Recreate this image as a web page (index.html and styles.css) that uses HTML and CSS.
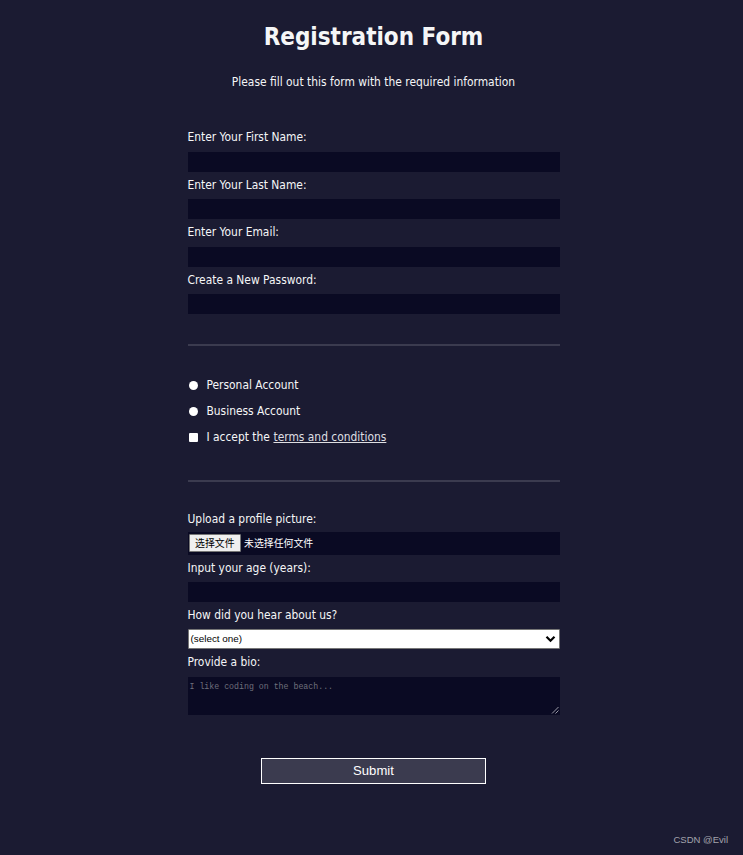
FILE: index.html
```html
<!DOCTYPE html>
<html lang="en">
<head>
<meta charset="utf-8">
<title>Registration Form</title>
<link rel="stylesheet" href="styles.css">
</head>
<body>
<h1 class="title">Registration Form</h1>
<p class="intro">Please fill out this form with the required information</p>
<form class="form">
  <fieldset class="group group-bordered">
    <label class="label">Enter Your First Name:</label>
    <div class="field"></div>
    <label class="label">Enter Your Last Name:</label>
    <div class="field"></div>
    <label class="label">Enter Your Email:</label>
    <div class="field"></div>
    <label class="label">Create a New Password:</label>
    <div class="field"></div>
  </fieldset>
  <fieldset class="group group-bordered group-choices">
    <label class="choice"><span class="radio"></span>Personal Account</label>
    <label class="choice"><span class="radio"></span>Business Account</label>
    <label class="choice"><span class="check"></span>I accept the <a class="link" href="#">terms and conditions</a></label>
  </fieldset>
  <fieldset class="group group-last">
    <label class="label">Upload a profile picture:</label>
    <div class="file"><span class="file-btn">选择文件</span><span class="file-name">未选择任何文件</span></div>
    <label class="label">Input your age (years):</label>
    <div class="field"></div>
    <label class="label">How did you hear about us?</label>
    <div class="select"><span>(select one)</span><svg class="chev" width="11" height="8" viewBox="0 0 11 8"><path d="M1.5 1.8 L5.5 5.8 L9.5 1.8" fill="none" stroke="#000" stroke-width="2.2"/></svg></div>
    <label class="label">Provide a bio:</label>
    <div class="textarea"><span class="placeholder">I like coding on the beach...</span><svg class="grip" width="8" height="8" viewBox="0 0 8 8"><path d="M7.5 1 L1 7.5 M7.5 4.5 L4.5 7.5" stroke="#9a9aa6" stroke-width="1"/></svg></div>
  </fieldset>
  <div class="submit">Submit</div>
</form>
<div class="watermark">CSDN @Evil</div>
</body>
</html>
```
FILE: styles.css
```css
html, body {
  margin: 0;
  padding: 0;
}
body {
  background: #1b1b32;
  color: #f5f6f7;
  font-family: "DejaVu Sans Condensed", "DejaVu Sans", sans-serif;
  font-size: 11.9px;
  line-height: 14px;
  padding: 2px 0 0 4px;
  min-height: 853px;
  position: relative;
}
.title {
  font-size: 24px;
  line-height: 28px;
  font-weight: bold;
  text-align: center;
  margin: 21px 0 0;
}
.intro {
  text-align: center;
  margin: 24px 0 0;
}
.form {
  width: 372px;
  margin: 0 auto;
}
.group {
  border: none;
  margin: 0;
  padding: 35px 0 0;
  min-width: 0;
}
.group-bordered {
  border-bottom: 2px solid #3b3b4f;
  padding-bottom: 30px;
}
.label {
  display: block;
  margin: 6px 0 0;
}
.field {
  margin-top: 7.5px;
  height: 20px;
  background: #0a0a23;
}
.group-choices {
  display: flex;
  flex-direction: column;
  gap: 12px;
  padding-top: 32px;
  padding-bottom: 35.5px;
}
.choice {
  display: flex;
  align-items: center;
}
.radio {
  width: 9px;
  height: 9px;
  border-radius: 50%;
  background: #fff;
  margin: 1px 9px 0 1px;
}
.check {
  width: 9px;
  height: 9px;
  background: #fff;
  border-radius: 1px;
  margin: 1px 9px 0 1px;
}
.link {
  color: #dfdfe2;
  margin-left: 0.3em;
}
.group-last {
  padding-top: 24px;
}
.file {
  margin-top: 6.5px;
  height: 22.5px;
  background: #0a0a23;
  display: flex;
  align-items: center;
  padding-left: 1.5px;
  font-family: "Noto Sans CJK SC", sans-serif;
  font-size: 9.9px;
}
.file-btn {
  background: #efefef;
  color: #000;
  border: 1px solid #767676;
  border-radius: 1px;
  height: 16px;
  line-height: 16px;
  padding: 0 5px;
  margin-right: 3.5px;
}
.file-name {
  color: #fff;
}
.select {
  margin-top: 7px;
  height: 18px;
  background: #fff;
  border: 1px solid #767676;
  border-radius: 1px;
  display: flex;
  align-items: center;
  justify-content: space-between;
  padding: 0 3px 0 2px;
  color: #000;
  font-family: "Liberation Sans", Arial, sans-serif;
  font-size: 9.9px;
}
.textarea {
  margin-top: 8px;
  height: 38px;
  background: #0a0a23;
  position: relative;
  padding: 3px 2px 0;
  box-sizing: border-box;
  line-height: 10px;
}
.placeholder {
  color: #6f6f7c;
  font-family: "Liberation Mono", "DejaVu Sans Mono", monospace;
  font-size: 8.25px;
}
.grip {
  position: absolute;
  right: 1px;
  bottom: 1px;
}
.submit {
  width: 223px;
  height: 24px;
  margin: 43px auto 0;
  background: #3b3b4f;
  border: 1px solid #fff;
  color: #fff;
  text-align: center;
  line-height: 24px;
  font-family: "Liberation Sans", Arial, sans-serif;
  font-size: 13.1px;
}
.watermark {
  position: absolute;
  right: 15px;
  bottom: 8px;
  color: #a3a3ad;
  font-family: "Liberation Sans", Arial, sans-serif;
  font-size: 9.5px;
}
```
